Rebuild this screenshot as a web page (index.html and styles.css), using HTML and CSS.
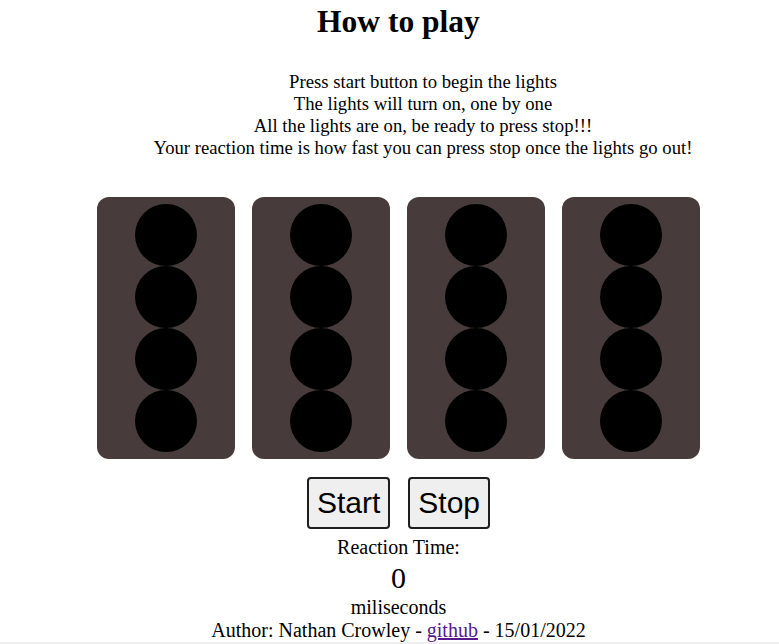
FILE: index.html
```html
<!DOCTYPE html>
<html lang="en">
<head>
<meta charset="utf-8">
<title>Reaction Time</title>
<link rel="stylesheet" href="styles.css">
</head>
<body>
<div class="page">
  <h1 class="title">How to play</h1>
  <div class="instructions">
    <div>Press start button to begin the lights</div>
    <div>The lights will turn on, one by one</div>
    <div>All the lights are on, be ready to press stop!!!</div>
    <div>Your reaction time is how fast you can press stop once the lights go out!</div>
  </div>
  <div class="lights">
    <div class="panel"><span class="bulb"></span><span class="bulb"></span><span class="bulb"></span><span class="bulb"></span></div>
    <div class="panel"><span class="bulb"></span><span class="bulb"></span><span class="bulb"></span><span class="bulb"></span></div>
    <div class="panel"><span class="bulb"></span><span class="bulb"></span><span class="bulb"></span><span class="bulb"></span></div>
    <div class="panel"><span class="bulb"></span><span class="bulb"></span><span class="bulb"></span><span class="bulb"></span></div>
  </div>
  <div class="controls">
    <button class="btn" type="button">Start</button>
    <button class="btn" type="button">Stop</button>
  </div>
  <div class="result">
    <div class="label">Reaction Time:</div>
    <div class="time">0</div>
    <div class="label">miliseconds</div>
    <div class="label">Author: Nathan Crowley - <a class="link" href="#">github</a> - 15/01/2022</div>
  </div>
</div>
<div class="strip"></div>
</body>
</html>
```

FILE: styles.css
```css
html, body {
  margin: 0;
  padding: 0;
  background: #ffffff;
}

body {
  font-family: "Liberation Serif", "Times New Roman", serif;
  color: #000;
}

.page {
  padding: 4px 0 0 18px;
  display: flex;
  flex-direction: column;
  align-items: center;
  text-align: center;
}

.title {
  margin: 0;
  font-size: 31.5px;
  font-weight: bold;
}

.instructions {
  margin: 31px 0 0 49px;
  font-size: 18.7px;
  line-height: 22px;
}

.lights {
  margin-top: 38px;
  display: flex;
  gap: 17px;
}

.panel {
  width: 138px;
  height: 262px;
  box-sizing: border-box;
  padding: 7px 0;
  background: #483b3b;
  border-radius: 12px;
  display: flex;
  flex-direction: column;
  align-items: center;
}

.bulb {
  width: 62px;
  height: 62px;
  border-radius: 50%;
  background: #000;
}

.controls {
  margin-top: 18px;
  display: flex;
  gap: 18px;
}

.btn {
  font-family: "Liberation Sans", Arial, sans-serif;
  font-size: 30px;
  line-height: 34px;
  padding: 7px 8px;
  background: #efefef;
  color: #000;
  border: 2px solid #1e1e1e;
  border-radius: 4px;
  margin: 0;
}

.result {
  margin-top: 7px;
  display: flex;
  flex-direction: column;
  align-items: center;
}

.label {
  font-size: 20px;
  line-height: 23px;
}

.time {
  margin-top: 2px;
  font-size: 30px;
  line-height: 34.5px;
}

.link {
  color: #551a8b;
}

.strip {
  height: 20px;
  background: #f0f0f0;
}
```
